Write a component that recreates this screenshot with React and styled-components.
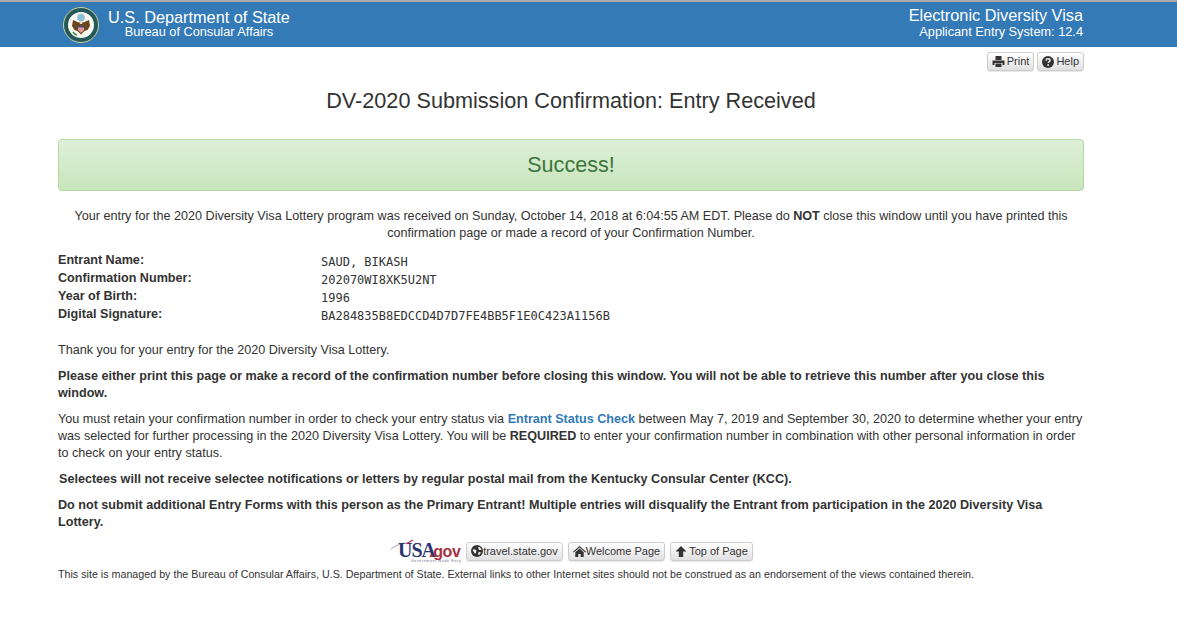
import styled, { createGlobalStyle } from 'styled-components';

const GlobalStyle = createGlobalStyle`
  html, body {
    margin: 0;
    padding: 0;
    background: #fff;
  }
  body {
    font-family: "Liberation Sans", Arial, sans-serif;
    font-size: 12.6px;
    line-height: 17px;
    color: #333;
  }
`;

const Banner = styled.header`
  height: 45px;
  margin-top: 2px;
  background: #337ab7;
  color: #fff;
  box-shadow: 0 -2px 0 #aaa;
`;

const BannerInner = styled.div`
  width: 1026px;
  margin-left: 57px;
  height: 100%;
  display: flex;
  justify-content: space-between;
`;

const Brand = styled.div`
  display: flex;
  align-items: center;
  gap: 9px;
  padding-left: 6px;
`;

const BrandText = styled.div`
  display: flex;
  flex-direction: column;
  align-items: center;
`;

const BannerTitle = styled.div`
  font-size: 16.3px;
  line-height: 17px;
  margin-top: -1px;
`;

const BannerSub = styled.div`
  font-size: 12.75px;
  line-height: 14px;
  margin-top: ${({ $shift }) => $shift ?? 0}px;
`;

const SystemText = styled.div`
  display: flex;
  flex-direction: column;
  align-items: flex-end;
  justify-content: center;
  margin-top: -2px;
`;

const Page = styled.main`
  width: 1026px;
  margin-left: 58px;
`;

const ToolRow = styled.div`
  display: flex;
  justify-content: flex-end;
  gap: 3px;
  margin-top: 5px;
`;

const Btn = styled.a`
  display: inline-flex;
  align-items: center;
  gap: ${({ $gap }) => $gap ?? 2}px;
  height: 17px;
  padding: 0 4px;
  font-size: 11px;
  color: #333;
  background: linear-gradient(#fff, #e0e0e0);
  border: 1px solid #ccc;
  border-radius: 3px;
  box-shadow: 0 1px 1px rgba(0, 0, 0, 0.1);
`;

const Heading = styled.h1`
  margin: 17px 0 0;
  font-size: 21.65px;
  line-height: 26px;
  font-weight: 400;
  text-align: center;
`;

const SuccessBox = styled.div`
  margin-top: 25px;
  height: 49px;
  padding-bottom: 1px;
  display: flex;
  align-items: center;
  justify-content: center;
  font-size: 21.6px;
  color: #3c763d;
  background: linear-gradient(#dff0d8, #c8e5bc);
  border: 1px solid #b2dba1;
  border-radius: 4px;
`;

const Notice = styled.p`
  margin: 17px 0 0;
  text-align: center;
`;

const Details = styled.dl`
  margin: 10px 0 0;
  display: grid;
  grid-template-columns: 263px 1fr;
  grid-auto-rows: 18px;
`;

const Label = styled.dt`
  font-weight: 700;
  line-height: 17px;
`;

const Value = styled.dd`
  margin: 0;
  font-family: "DejaVu Sans Mono", monospace;
  font-size: 12px;
  line-height: 21px;
`;

const Para = styled.p`
  margin: ${({ $top }) => $top ?? 9}px 0 0;
  font-weight: ${({ $bold }) => ($bold ? 700 : 400)};
  padding-left: ${({ $indent }) => ($indent ? 1 : 0)}px;
`;

const StatusLink = styled.a`
  color: #337ab7;
  font-weight: 700;
`;

const FooterLinks = styled.div`
  display: flex;
  justify-content: center;
  align-items: center;
  gap: 5px;
  margin-top: 8px;
  padding-left: 2px;
`;

const UsaLogo = styled.svg`
  display: block;
`;

const Disclaimer = styled.p`
  margin: 4px 0 0;
  font-size: 10.71px;
  line-height: 14px;
`;

function Printer() {
  return (
    <svg width="13" height="11" viewBox="0 0 13 11" fill="#333">
      <rect x="3.500" y="0" width="6" height="4" />
      <path d="M0.500 4.500h12v4.500h-2v-2h-8v2h-2z" />
      <rect x="3.500" y="7.500" width="6" height="3.500" />
    </svg>
  );
}

function Question() {
  return (
    <svg width="12" height="12" viewBox="0 0 12 12">
      <circle cx="6" cy="6" r="6" fill="#333" />
      <path d="M4 4.600c.1-1.200.9-1.800 2-1.800s2 .7 2 1.600c0 1.400-1.800 1.300-1.800 2.700" fill="none" stroke="#eee" strokeWidth="1.500" />
      <rect x="5.300" y="8.200" width="1.700" height="1.600" fill="#eee" />
    </svg>
  );
}

function Globe() {
  return (
    <svg width="12" height="12" viewBox="0 0 11 11">
      <circle cx="5.500" cy="5.500" r="5.500" fill="#333" />
      <path d="M1.500 4.500c1-1.200 2.300-.6 3.500.5l-.6 2.500-1 .2zM6.800 1.500c1.200.2 2.300 1.200 2.900 2.800l-2.100.3-1-1.700zM7 6.500l2.200.2-1.600 2.400-1.100-.5z" fill="#eee" />
    </svg>
  );
}

function HomeIcon() {
  return (
    <svg width="13" height="11" viewBox="0 0 13 11" fill="#333">
      <path d="M6.500 0l6.500 5.700-.8.800-5.700-4.900-5.700 4.900-.8-.800z" />
      <path d="M2.300 6.200l4.200-3.600 4.200 3.600v4.800h-3v-3h-2.400v3h-3z" />
    </svg>
  );
}

function ArrowUp() {
  return (
    <svg width="12" height="11" viewBox="0 0 12 11" fill="#333">
      <path d="M6 0l5.500 5.400h-3.300v5.600h-4.400v-5.600h-3.300z" />
    </svg>
  );
}

function Seal() {
  return (
    <svg width="36" height="36" viewBox="0 0 36 36">
      <circle cx="18" cy="18" r="17.500" fill="#24595c" stroke="#d6d09a" strokeWidth="1" />
      <circle cx="18" cy="18" r="13" fill="#f7f7f0" />
      <circle cx="18" cy="10.500" r="3.800" fill="#8cc0d8" />
      <path d="M18 14l2.500 1.500 5.500-2.500 1 6-2.500 4-3 1-3.500 3.500-3.500-3.500-3-1-2.500-4 1-6 5.500 2.500z" fill="#6a4522" />
      <path d="M15 19h6v4l-3 3-3-3z" fill="#e09a9a" />
      <path d="M15 19h6v1.500h-6z" fill="#3a4f8a" />
      <circle cx="18" cy="15.500" r="1.500" fill="#f2e9c9" />
      <path d="M10 25c1 1.500 2.500 2.500 4 3" fill="none" stroke="#3d8a4e" strokeWidth="1.500" />
    </svg>
  );
}

function UsaGov() {
  return (
    <UsaLogo width="70" height="24" viewBox="0 0 70 24">
      <path d="M0 10C5 6 11 4 17 4" fill="none" stroke="#8f88a8" strokeWidth="0.800" />
      <path d="M15 5l7-4" fill="none" stroke="#c0303c" strokeWidth="1.300" />
      <text x="7" y="18" fontFamily="Liberation Serif, serif" fontSize="20" fontWeight="700" fill="#2c3470" letterSpacing="-1">USA</text>
      <text x="38" y="18" fontFamily="Liberation Sans, sans-serif" fontSize="16" fontWeight="700" fill="#a8323f" letterSpacing="-0.300">.gov</text>
      <text x="20" y="22.500" fontFamily="Liberation Sans, sans-serif" fontSize="3.500" fill="#6f6a8c" textLength="50">Government Made Easy</text>
    </UsaLogo>
  );
}

export default function App() {
  return (
    <>
      <GlobalStyle />
      <Banner>
        <BannerInner>
          <Brand>
            <Seal />
            <BrandText>
              <BannerTitle>U.S. Department of State</BannerTitle>
              <BannerSub $shift={-1}>Bureau of Consular Affairs</BannerSub>
            </BrandText>
          </Brand>
          <SystemText>
            <BannerTitle>Electronic Diversity Visa</BannerTitle>
            <BannerSub $shift={1}>Applicant Entry System: 12.4</BannerSub>
          </SystemText>
        </BannerInner>
      </Banner>
      <Page>
        <ToolRow>
          <Btn><Printer />Print</Btn>
          <Btn><Question />Help</Btn>
        </ToolRow>
        <Heading>DV-2020 Submission Confirmation: Entry Received</Heading>
        <SuccessBox>Success!</SuccessBox>
        <Notice>
          Your entry for the 2020 Diversity Visa Lottery program was received on Sunday, October 14, 2018 at 6:04:55 AM EDT. Please do <b>NOT</b> close this window until you have printed this confirmation page or made a record of your Confirmation Number.
        </Notice>
        <Details>
          <Label>Entrant Name:</Label>
          <Value>SAUD, BIKASH</Value>
          <Label>Confirmation Number:</Label>
          <Value>202070WI8XK5U2NT</Value>
          <Label>Year of Birth:</Label>
          <Value>1996</Value>
          <Label>Digital Signature:</Label>
          <Value>BA284835B8EDCCD4D7D7FE4BB5F1E0C423A1156B</Value>
        </Details>
        <Para $top={18}>Thank you for your entry for the 2020 Diversity Visa Lottery.</Para>
        <Para $bold>Please either print this page or make a record of the confirmation number before closing this window. You will not be able to retrieve this number after you close this window.</Para>
        <Para>
          You must retain your confirmation number in order to check your entry status via <StatusLink>Entrant Status Check</StatusLink> between May 7, 2019 and September 30, 2020 to determine whether your entry was selected for further processing in the 2020 Diversity Visa Lottery. You will be <b>REQUIRED</b> to enter your confirmation number in combination with other personal information in order to check on your entry status.
        </Para>
        <Para $bold $indent>Selectees will not receive selectee notifications or letters by regular postal mail from the Kentucky Consular Center (KCC).</Para>
        <Para $bold>Do not submit additional Entry Forms with this person as the Primary Entrant! Multiple entries will disqualify the Entrant from participation in the 2020 Diversity Visa Lottery.</Para>
        <FooterLinks>
          <UsaGov />
          <Btn $gap={0}><Globe />travel.state.gov</Btn>
          <Btn $gap={0}><HomeIcon />Welcome Page</Btn>
          <Btn><ArrowUp />Top of Page</Btn>
        </FooterLinks>
        <Disclaimer>This site is managed by the Bureau of Consular Affairs, U.S. Department of State. External links to other Internet sites should not be construed as an endorsement of the views contained therein.</Disclaimer>
      </Page>
    </>
  );
}
